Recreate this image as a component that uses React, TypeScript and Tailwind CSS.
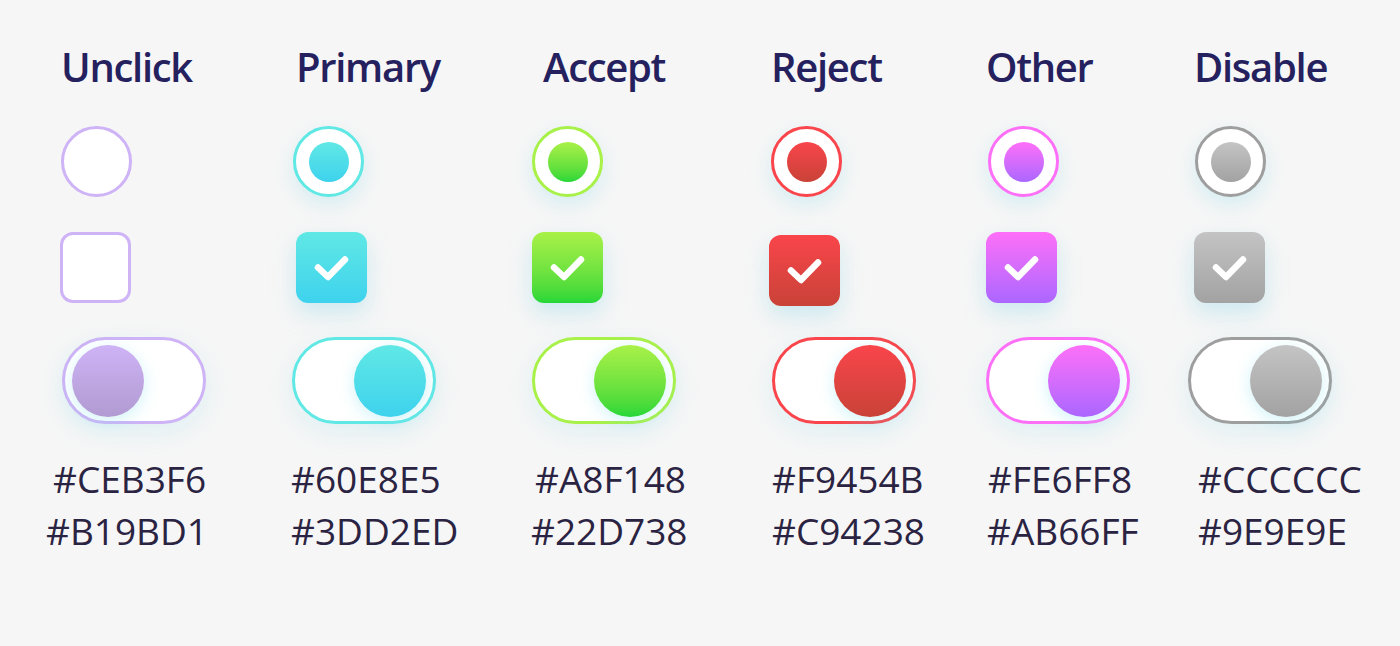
import React from "react";

type Variant = {
  name: string;
  hex: [string, string];
  width: string; // column width
  title: string; // title offset
  box: string; // checkbox offset
  toggle: string; // toggle offset
  hex1: string;
  hex2: string;
  ring: string; // border colour
  fill: string; // gradient
  on: boolean;
  empty?: boolean;
};

const VARIANTS: Variant[] = [
  {
    name: "Unclick",
    hex: ["#CEB3F6", "#B19BD1"],
    width: "w-[232px]",
    title: "ml-[0px]",
    box: "ml-[-1px] mt-[35px]",
    toggle: "ml-[1px]",
    hex1: "ml-[-8px]",
    hex2: "ml-[-15px]",
    ring: "border-[#CEB3F6]",
    fill: "bg-linear-to-b from-[#CEB3F6] to-[#B19BD1]",
    on: false,
    empty: true,
  },
  {
    name: "Primary",
    hex: ["#60E8E5", "#3DD2ED"],
    width: "w-[239px]",
    title: "ml-[3px]",
    box: "ml-[3px] mt-[35px]",
    toggle: "ml-[-1px]",
    hex1: "ml-[-2px]",
    hex2: "ml-[-2px]",
    ring: "border-[#60E8E5]",
    fill: "bg-linear-to-b from-[#60E8E5] to-[#3DD2ED]",
    on: true,
  },
  {
    name: "Accept",
    hex: ["#A8F148", "#22D738"],
    width: "w-[239px]",
    title: "ml-[11px]",
    box: "ml-[0px] mt-[35px]",
    toggle: "ml-[0px]",
    hex1: "ml-[3px]",
    hex2: "ml-[-1px]",
    ring: "border-[#A8F148]",
    fill: "bg-linear-to-b from-[#A8F148] to-[#22D738]",
    on: true,
  },
  {
    name: "Reject",
    hex: ["#F9454B", "#C94238"],
    width: "w-[217px]",
    title: "ml-[0px]",
    box: "ml-[-2px] mt-[38px] mb-[-3px]",
    toggle: "ml-[1px]",
    hex1: "ml-[1px]",
    hex2: "ml-[1px]",
    ring: "border-[#F9454B]",
    fill: "bg-linear-to-b from-[#F9454B] to-[#C94238]",
    on: true,
  },
  {
    name: "Other",
    hex: ["#FE6FF8", "#AB66FF"],
    width: "w-[207px]",
    title: "ml-[-2px]",
    box: "ml-[-2px] mt-[35px]",
    toggle: "ml-[-2px]",
    hex1: "ml-[0px]",
    hex2: "ml-[-1px]",
    ring: "border-[#FE6FF8]",
    fill: "bg-linear-to-b from-[#FE6FF8] to-[#AB66FF]",
    on: true,
  },
  {
    name: "Disable",
    hex: ["#CCCCCC", "#9E9E9E"],
    width: "w-[205px]",
    title: "ml-[-1px]",
    box: "ml-[-1px] mt-[35px]",
    toggle: "ml-[-7px]",
    hex1: "ml-[3px]",
    hex2: "ml-[3px]",
    ring: "border-[#9E9E9E]",
    fill: "bg-linear-to-b from-[#C4C4C4] to-[#A2A2A2]",
    on: true,
  },
];

const glow = "shadow-[0_8px_20px_rgba(130,215,232,0.28)]";

function Check() {
  return (
    <svg viewBox="0 0 71 71" width="71" height="71">
      <polyline
        points="22,35.5 32,45 49,27.5"
        fill="none"
        stroke="white"
        strokeWidth="6.5"
        strokeLinecap="round"
        strokeLinejoin="round"
      />
    </svg>
  );
}

function Column({ v }: { v: Variant }) {
  return (
    <div className={`flex shrink-0 flex-col items-start ${v.width}`}>
      <h2
        className={`text-[40px] leading-[42px] font-semibold tracking-[-1.3px] text-[#25215e] ${v.title}`}
        style={{ fontFamily: '"Open Sans", sans-serif' }}
      >
        {v.name}
      </h2>

      {/* radio */}
      <div
        className={`mt-[38px] flex h-[71px] w-[71px] items-center justify-center rounded-full border-[3px] bg-white ${v.ring} ${
          v.empty ? "" : glow
        }`}
      >
        {!v.empty && <div className={`h-[40px] w-[40px] rounded-full ${v.fill}`} />}
      </div>

      {/* checkbox */}
      {v.empty ? (
        <div className={`h-[71px] w-[71px] rounded-[13px] border-[3px] bg-white ${v.ring} ${v.box}`} />
      ) : (
        <div
          className={`h-[71px] w-[71px] rounded-[12px] shadow-[0_10px_22px_rgba(130,210,228,0.35)] ${v.fill} ${v.box}`}
        >
          <Check />
        </div>
      )}

      {/* toggle */}
      <div
        className={`mt-[34px] flex h-[87px] w-[144px] items-center rounded-full border-[3px] bg-white px-[7px] shadow-[0_8px_26px_rgba(140,220,236,0.22)] ${
          v.on ? "justify-end" : "justify-start"
        } ${v.ring} ${v.toggle}`}
      >
        <div
          className={`h-[72px] w-[72px] rounded-full shadow-[0_4px_16px_rgba(120,220,236,0.35)] ${v.fill}`}
        />
      </div>

      <div
        className="mt-[29px] text-[37px] leading-[52px] text-[#2b2342]"
        style={{ fontFamily: '"Open Sans", sans-serif' }}
      >
        <div className={v.hex1}>{v.hex[0]}</div>
        <div className={v.hex2}>{v.hex[1]}</div>
      </div>
    </div>
  );
}

export default function App() {
  return (
    <div className="h-[646px] w-[1400px] overflow-hidden bg-[#f6f6f6] pl-[61px] pt-[46px]">
      <div className="flex">
        {VARIANTS.map((v) => (
          <Column key={v.name} v={v} />
        ))}
      </div>
    </div>
  );
}
